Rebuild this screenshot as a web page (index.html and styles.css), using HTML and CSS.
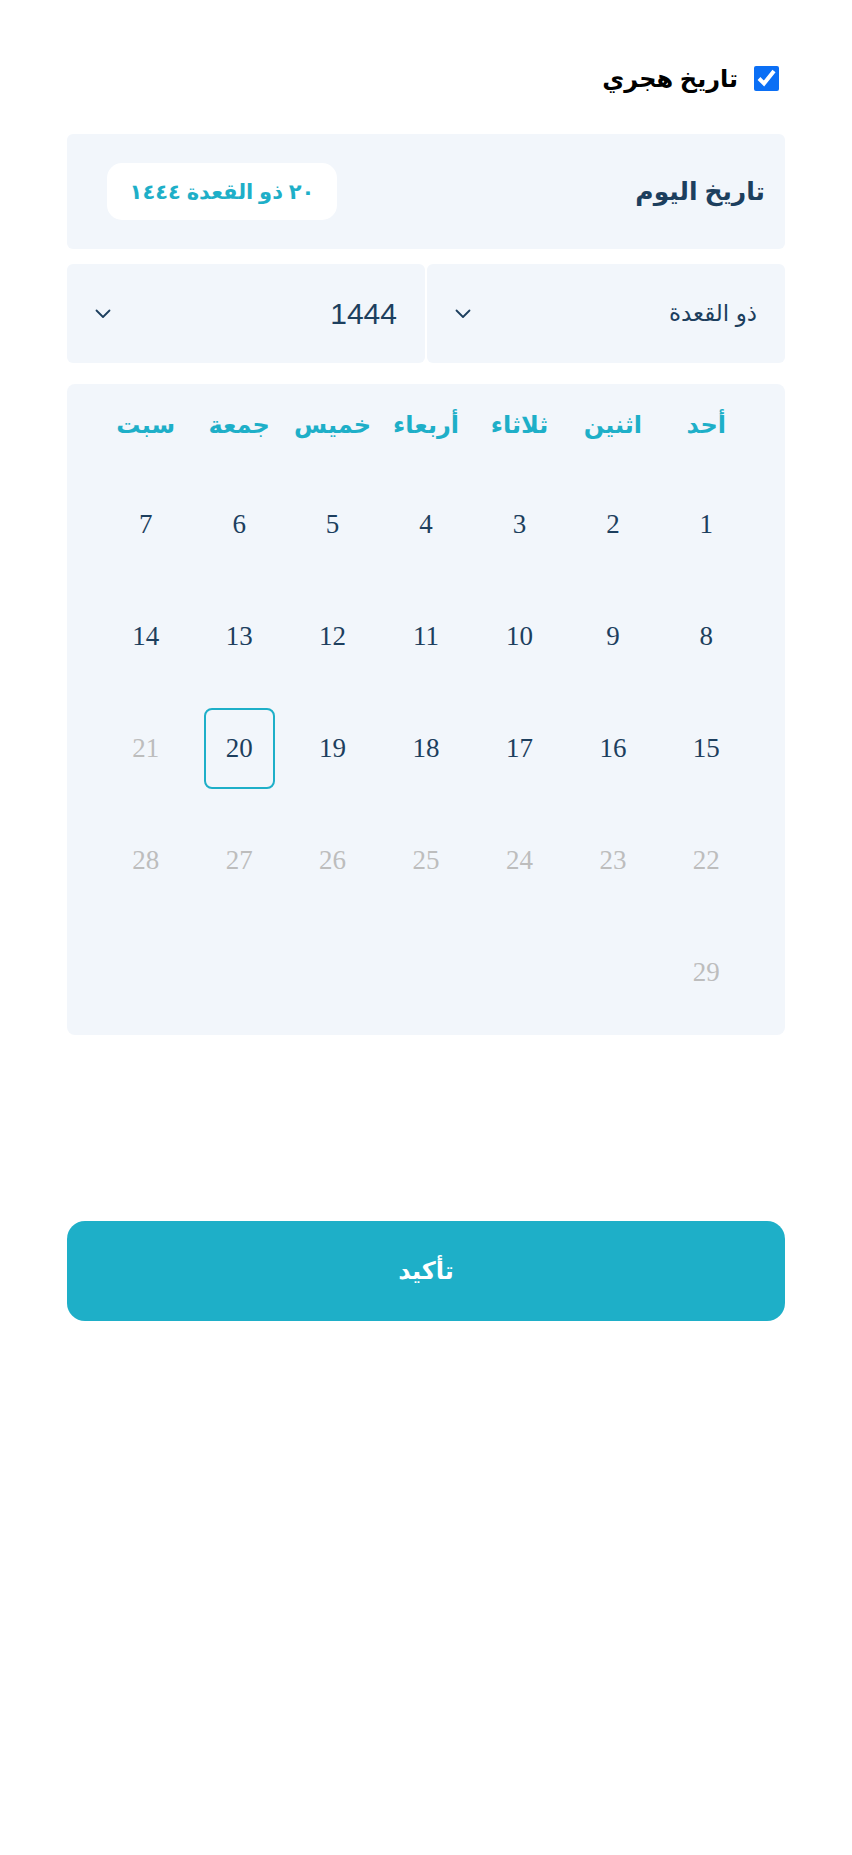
FILE: index.html
```html
<!DOCTYPE html>
<html lang="ar" dir="rtl">
<head>
<meta charset="utf-8">
<title>تاريخ هجري</title>
<link rel="stylesheet" href="styles.css">
</head>
<body>
<div class="page">
  <label class="hijri-toggle">
    <input type="checkbox" class="hijri-check" checked>
    <span class="hijri-label">تاريخ هجري</span>
  </label>

  <div class="today-card">
    <span class="today-label">تاريخ اليوم</span>
    <span class="today-pill">٢٠ ذو القعدة ١٤٤٤</span>
  </div>

  <div class="selects">
    <div class="select">
      <span class="select-text month">ذو القعدة</span>
      <svg class="chevron" width="16" height="10" viewBox="0 0 16 10"><path d="M1.5 1.5 L8 8 L14.5 1.5" fill="none" stroke="#1d3f5e" stroke-width="1.8" stroke-linecap="round" stroke-linejoin="round"/></svg>
    </div>
    <div class="select">
      <span class="select-text year">1444</span>
      <svg class="chevron" width="16" height="10" viewBox="0 0 16 10"><path d="M1.5 1.5 L8 8 L14.5 1.5" fill="none" stroke="#1d3f5e" stroke-width="1.8" stroke-linecap="round" stroke-linejoin="round"/></svg>
    </div>
  </div>

  <div class="calendar">
    <div class="weekdays">
      <span>أحد</span><span>اثنين</span><span>ثلاثاء</span><span>أربعاء</span><span>خميس</span><span>جمعة</span><span>سبت</span>
    </div>
    <div class="days">
      <span class="day">1</span><span class="day">2</span><span class="day">3</span><span class="day">4</span><span class="day">5</span><span class="day">6</span><span class="day">7</span>
      <span class="day">8</span><span class="day">9</span><span class="day">10</span><span class="day">11</span><span class="day">12</span><span class="day">13</span><span class="day">14</span>
      <span class="day">15</span><span class="day">16</span><span class="day">17</span><span class="day">18</span><span class="day">19</span><span class="day selected">20</span><span class="day muted">21</span>
      <span class="day muted">22</span><span class="day muted">23</span><span class="day muted">24</span><span class="day muted">25</span><span class="day muted">26</span><span class="day muted">27</span><span class="day muted">28</span>
      <span class="day muted">29</span>
    </div>
  </div>

  <button class="confirm" type="button">تأكيد</button>
</div>
</body>
</html>
```
FILE: styles.css
```css
* { box-sizing: border-box; }

html, body {
  margin: 0;
  padding: 0;
  background: #ffffff;
}

body {
  font-family: "Liberation Sans", "DejaVu Sans", sans-serif;
  color: #1d3f5e;
}

.page {
  width: 852px;
  padding: 66px 67px 0;
  display: flex;
  flex-direction: column;
}

.hijri-toggle {
  display: flex;
  align-items: center;
  height: 25px;
  gap: 16px;
  padding-right: 6px;
}

.hijri-check {
  width: 25px;
  height: 25px;
  margin: 0;
  accent-color: #0b6ff5;
}

.hijri-label {
  font-size: 24px;
  font-weight: bold;
  color: #000;
  line-height: 25px;
}

.today-card {
  margin-top: 43px;
  height: 115px;
  background: #f2f6fb;
  border-radius: 6px;
  display: flex;
  align-items: center;
  justify-content: space-between;
  padding: 0 20px 0 40px;
}

.today-label {
  font-size: 25px;
  font-weight: 600;
  color: #1d3f5e;
}

.today-pill {
  width: 230px;
  height: 57px;
  background: #ffffff;
  border-radius: 15px;
  display: flex;
  align-items: center;
  justify-content: center;
  font-size: 21px;
  font-weight: 600;
  color: #1eafc8;
}

.selects {
  margin-top: 15px;
  display: grid;
  grid-template-columns: 1fr 1fr;
  gap: 2px;
}

.select {
  height: 99px;
  background: #f2f6fb;
  border-radius: 6px;
  display: flex;
  align-items: center;
  justify-content: space-between;
  padding: 0 28px 0 28px;
}

.select-text.month {
  font-size: 23px;
}

.select-text.year {
  font-size: 30px;
  font-family: "Liberation Sans", Arial, sans-serif;
}

.chevron { display: block; }

.calendar {
  margin-top: 21px;
  height: 651px;
  background: #f2f6fb;
  border-radius: 8px;
  padding: 18px 32px 0;
}

.weekdays {
  display: grid;
  grid-template-columns: repeat(7, 1fr);
  height: 46px;
  align-items: center;
  text-align: center;
  font-size: 24px;
  font-weight: 600;
  color: #1eafc8;
}

.days {
  margin-top: 36px;
  display: grid;
  grid-template-columns: repeat(7, 1fr);
  grid-auto-rows: 81px;
  row-gap: 31px;
  justify-items: center;
}

.day {
  width: 71px;
  height: 81px;
  display: flex;
  align-items: center;
  justify-content: center;
  font-family: "Liberation Serif", "Times New Roman", serif;
  font-size: 27px;
  color: #1d3f5e;
  border-radius: 8px;
}

.day.muted { color: #bdbdbd; }

.day.selected {
  border: 2px solid #1eafc8;
}

.confirm {
  margin-top: 186px;
  height: 100px;
  border: 0;
  border-radius: 18px;
  background: #1eafc8;
  color: #ffffff;
  font-family: "Liberation Sans", "DejaVu Sans", sans-serif;
  font-size: 24px;
  font-weight: bold;
  cursor: pointer;
}
```
